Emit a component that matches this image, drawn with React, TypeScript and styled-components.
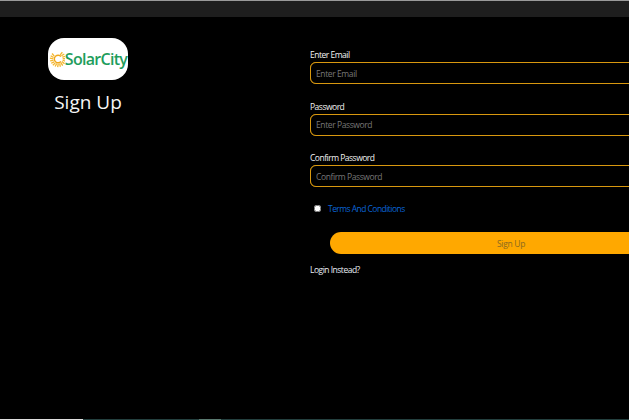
import styled, { createGlobalStyle } from "styled-components";

const GlobalStyle = createGlobalStyle`
  html, body {
    margin: 0;
    height: 100%;
    background: #000;
    overflow: hidden;
  }
  #root {
    height: 100%;
  }
`;

const Page = styled.div`
  display: flex;
  flex-direction: column;
  width: 629px;
  height: 420px;
  overflow: hidden;
  background: #000;
  font-family: "Open Sans", sans-serif;
`;

const TopBar = styled.div`
  flex: none;
  height: 16px;
  background: #1e1e1e;
  border-top: 1px solid #9a9a9a;
`;

const Main = styled.div`
  flex: 1;
  display: flex;
  min-height: 0;
`;

const Brand = styled.div`
  flex: none;
  width: 310px;
  box-sizing: border-box;
  padding: 21px 0 0 48px;
`;

const BrandInner = styled.div`
  display: flex;
  flex-direction: column;
  align-items: center;
  width: 80px;
  gap: 9px;
`;

const Logo = styled.div`
  display: flex;
  align-items: center;
  justify-content: center;
  width: 80px;
  height: 42px;
  background: #fff;
  border-radius: 16px;
`;

const LogoText = styled.span`
  font-family: "Open Sans", sans-serif;
  font-size: 16px;
  font-weight: 600;
  letter-spacing: -0.7px;
  color: #1f9d5c;
`;

const Title = styled.h1`
  margin: 0;
  font-size: 19px;
  font-weight: 400;
  line-height: 26px;
  white-space: nowrap;
  color: #f5f5f5;
`;

const Form = styled.form`
  flex: none;
  width: 400px;
  display: flex;
  flex-direction: column;
  padding-top: 32px;
`;

const Field = styled.div`
  display: flex;
  flex-direction: column;
  gap: 2px;
  margin-bottom: 16.5px;

  &:nth-of-type(3) {
    margin-bottom: 15px;
  }
`;

const Label = styled.label`
  font-size: 8.5px;
  letter-spacing: -0.5px;
  line-height: 11px;
  color: #f2f2f2;
`;

const Input = styled.input`
  box-sizing: border-box;
  width: 100%;
  height: 22px;
  padding: 0 5px;
  background: #000;
  border: 1px solid #d8980f;
  box-shadow: 0 0 0.6px #d8980f;
  border-radius: 6px;
  font-family: inherit;
  font-size: 8.5px;
  letter-spacing: -0.4px;
  color: #fff;
  outline: none;

  &::placeholder {
    color: #777;
    opacity: 1;
  }
`;

const TermsRow = styled.div`
  display: flex;
  align-items: center;
  gap: 7px;
  height: 12px;
  margin: 0 0 18px 4px;
`;

const Checkbox = styled.input`
  width: 7px;
  height: 7px;
  margin: 0;
`;

const TermsLink = styled.a`
  font-size: 8.5px;
  letter-spacing: -0.55px;
  color: #0a64d6;
  text-decoration: none;
`;

const SubmitButton = styled.button`
  flex: none;
  width: 362px;
  height: 22px;
  margin-left: 20px;
  padding: 0;
  background: #ffa800;
  border: none;
  border-radius: 11px;
  font-family: inherit;
  font-size: 8.5px;
  letter-spacing: -0.3px;
  color: #8a6a20;
`;

const LoginLink = styled.a`
  margin-top: 10px;
  font-size: 8.5px;
  letter-spacing: -0.5px;
  line-height: 11px;
  color: #e8eef5;
  text-decoration: none;
`;

const BottomStrip = styled.div`
  flex: none;
  display: flex;
  height: 1px;
  background: #24403f;
`;

const StripLight = styled.div`
  width: 83px;
  background: #e0e0e0;
`;

const StripThumb = styled.div`
  width: 22px;
  margin-left: 116px;
  background: #5a7a70;
`;

function Sun() {
  const rays = Array.from({ length: 16 }, (_, i) => 40 + (i * 280) / 15);
  return (
    <svg width="16" height="18" viewBox="0 0 16 18" aria-hidden="true">
      {rays.map((angle) => (
        <line
          key={angle}
          x1="8"
          y1="4.4"
          x2="8"
          y2="1"
          stroke="#f4b62c"
          strokeWidth="1.3"
          transform={`rotate(${angle} 9 9)`}
        />
      ))}
      <path d="M12 6.5A3.8 3.8 0 1 0 12 11.5" fill="none" stroke="#f0a81e" strokeWidth="1.4" />
    </svg>
  );
}

export default function App() {
  return (
    <Page>
      <GlobalStyle />
      <TopBar />
      <Main>
        <Brand>
          <BrandInner>
            <Logo>
              <Sun />
              <LogoText>SolarCity</LogoText>
            </Logo>
            <Title>Sign Up</Title>
          </BrandInner>
        </Brand>
        <Form>
          <Field>
            <Label>Enter Email</Label>
            <Input placeholder="Enter Email" />
          </Field>
          <Field>
            <Label>Password</Label>
            <Input placeholder="Enter Password" />
          </Field>
          <Field>
            <Label>Confirm Password</Label>
            <Input placeholder="Confirm Password" />
          </Field>
          <TermsRow>
            <Checkbox type="checkbox" />
            <TermsLink>Terms And Conditions</TermsLink>
          </TermsRow>
          <SubmitButton type="button">Sign Up</SubmitButton>
          <LoginLink>Login Instead?</LoginLink>
        </Form>
      </Main>
      <BottomStrip>
        <StripLight />
        <StripThumb />
      </BottomStrip>
    </Page>
  );
}
